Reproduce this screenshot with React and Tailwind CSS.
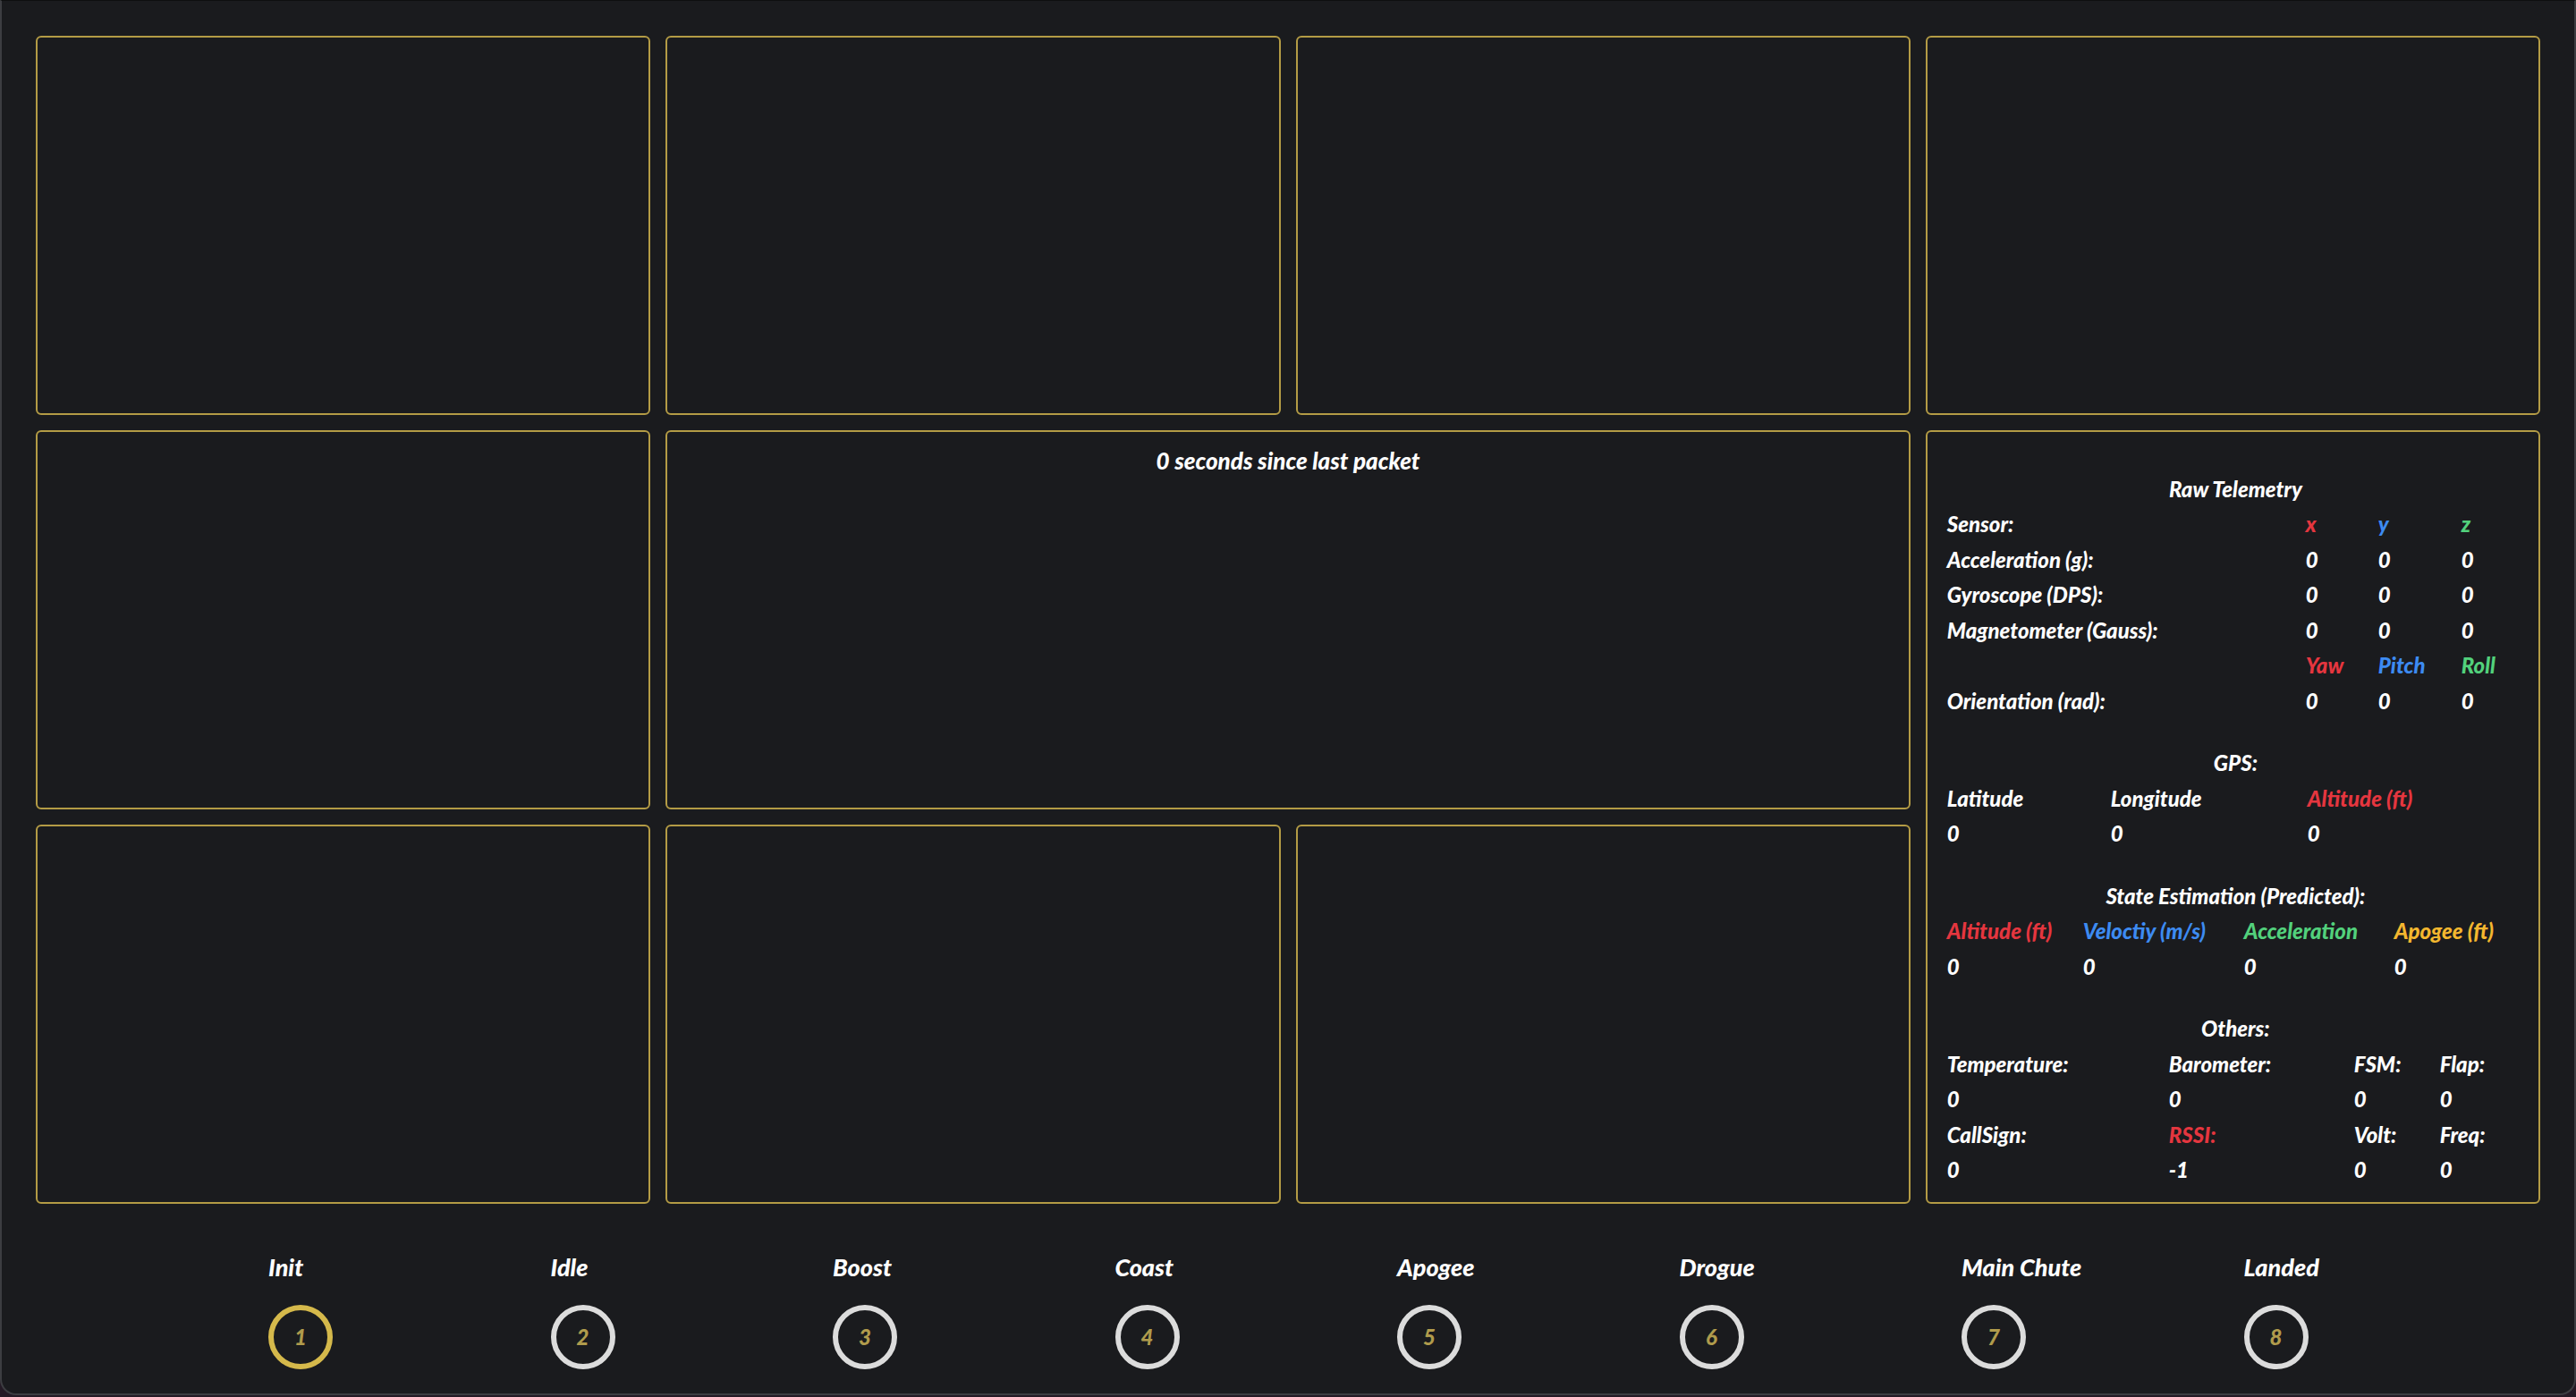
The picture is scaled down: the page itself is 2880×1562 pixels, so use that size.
import React from "react";

const RED = "text-[#e5363f]";
const BLUE = "text-[#3d8bf2]";
const GREEN = "text-[#52d17c]";
const YELLOW = "text-[#f4b72f]";

function Box({ className = "", children }) {
  return (
    <div className={`border-2 border-[#b39b45] rounded-[6px] bg-[#1a1b1e] ${className}`}>
      {children}
    </div>
  );
}

function Row({ cols, cells }) {
  return (
    <div className={`grid ${cols} h-[39.5px] items-center`}>
      {cells.map((c, i) => (
        <div key={i} className={`whitespace-nowrap ${c.c || "text-white"}`}>
          {c.t}
        </div>
      ))}
    </div>
  );
}

function Title({ children, className = "" }) {
  return (
    <div className={`h-[39.5px] flex items-center justify-center text-white ${className}`}>{children}</div>
  );
}

const RAW = "grid-cols-[401px_81px_93px_1fr]";
const GPS = "grid-cols-[183px_220px_1fr]";
const SE = "grid-cols-[152px_180px_168px_1fr]";
const OT = "grid-cols-[248px_207px_96px_1fr]";

function TelemetryPanel() {
  const w = (t) => ({ t });
  return (
    <div className="pt-[44px] pl-[22px] pr-[16px] text-[24px] leading-none">
      <Title>Raw Telemetry</Title>
      <Row cols={RAW} cells={[w("Sensor:"), { t: "x", c: RED }, { t: "y", c: BLUE }, { t: "z", c: GREEN }]} />
      <Row cols={RAW} cells={[w("Acceleration (g):"), w("0"), w("0"), w("0")]} />
      <Row cols={RAW} cells={[w("Gyroscope (DPS):"), w("0"), w("0"), w("0")]} />
      <Row cols={RAW} cells={[w("Magnetometer (Gauss):"), w("0"), w("0"), w("0")]} />
      <Row cols={RAW} cells={[w(""), { t: "Yaw", c: RED }, { t: "Pitch", c: BLUE }, { t: "Roll", c: GREEN }]} />
      <Row cols={RAW} cells={[w("Orientation (rad):"), w("0"), w("0"), w("0")]} />

      <Title className="mt-[30px]">GPS:</Title>
      <Row cols={GPS} cells={[w("Latitude"), w("Longitude"), { t: "Altitude (ft)", c: RED }]} />
      <Row cols={GPS} cells={[w("0"), w("0"), w("0")]} />

      <Title className="mt-[30px]">State Estimation (Predicted):</Title>
      <Row
        cols={SE}
        cells={[
          { t: "Altitude (ft)", c: RED },
          { t: "Veloctiy (m/s)", c: BLUE },
          { t: "Acceleration", c: GREEN },
          { t: "Apogee (ft)", c: YELLOW },
        ]}
      />
      <Row cols={SE} cells={[w("0"), w("0"), w("0"), w("0")]} />

      <Title className="mt-[30px]">Others:</Title>
      <Row cols={OT} cells={[w("Temperature:"), w("Barometer:"), w("FSM:"), w("Flap:")]} />
      <Row cols={OT} cells={[w("0"), w("0"), w("0"), w("0")]} />
      <Row cols={OT} cells={[w("CallSign:"), { t: "RSSI:", c: RED }, w("Volt:"), w("Freq:")]} />
      <Row cols={OT} cells={[w("0"), w("-1"), w("0"), w("0")]} />
    </div>
  );
}

const STATES = ["Init", "Idle", "Boost", "Coast", "Apogee", "Drogue", "Main Chute", "Landed"];

export default function App() {
  return (
    <div className="w-[2880px] h-[1562px] bg-[#241a25] font-['Lato','Open_Sans',sans-serif] font-black italic">
      <div className="h-[1560px] flex flex-col bg-[#1a1b1e] border-x-2 border-b-2 border-[#3c3d41] border-t border-t-[#0e0f10] rounded-b-[18px]">
        <div className="pt-[39px] px-[38px]">
          <div className="grid grid-cols-4 grid-rows-[424px_424px_424px] gap-[17px]">
            <Box />
            <Box />
            <Box />
            <Box />
            <Box />
            <Box className="col-span-2">
              <div className="pt-[17px] text-center text-white text-[26px] leading-[30px]">
                0 seconds since last packet
              </div>
            </Box>
            <Box className="row-span-2">
              <TelemetryPanel />
            </Box>
            <Box />
            <Box />
            <Box />
          </div>
        </div>
        <div className="flex pl-[298px] mt-[54px]">
          {STATES.map((s, i) => (
            <div key={s} className="w-[315.5px] shrink-0 flex flex-col items-start">
              <div className="text-white text-[27px] leading-[34px] whitespace-nowrap">{s}</div>
              <div
                className={`mt-[25px] w-[72px] h-[72px] rounded-full border-[6px] flex items-center justify-center ${
                  i === 0 ? "border-[#d5b94b]" : "border-[#dcdcdc]"
                }`}
              >
                <span className="text-[#b09b4c] text-[24px] leading-none">{i + 1}</span>
              </div>
            </div>
          ))}
        </div>
      </div>
    </div>
  );
}
